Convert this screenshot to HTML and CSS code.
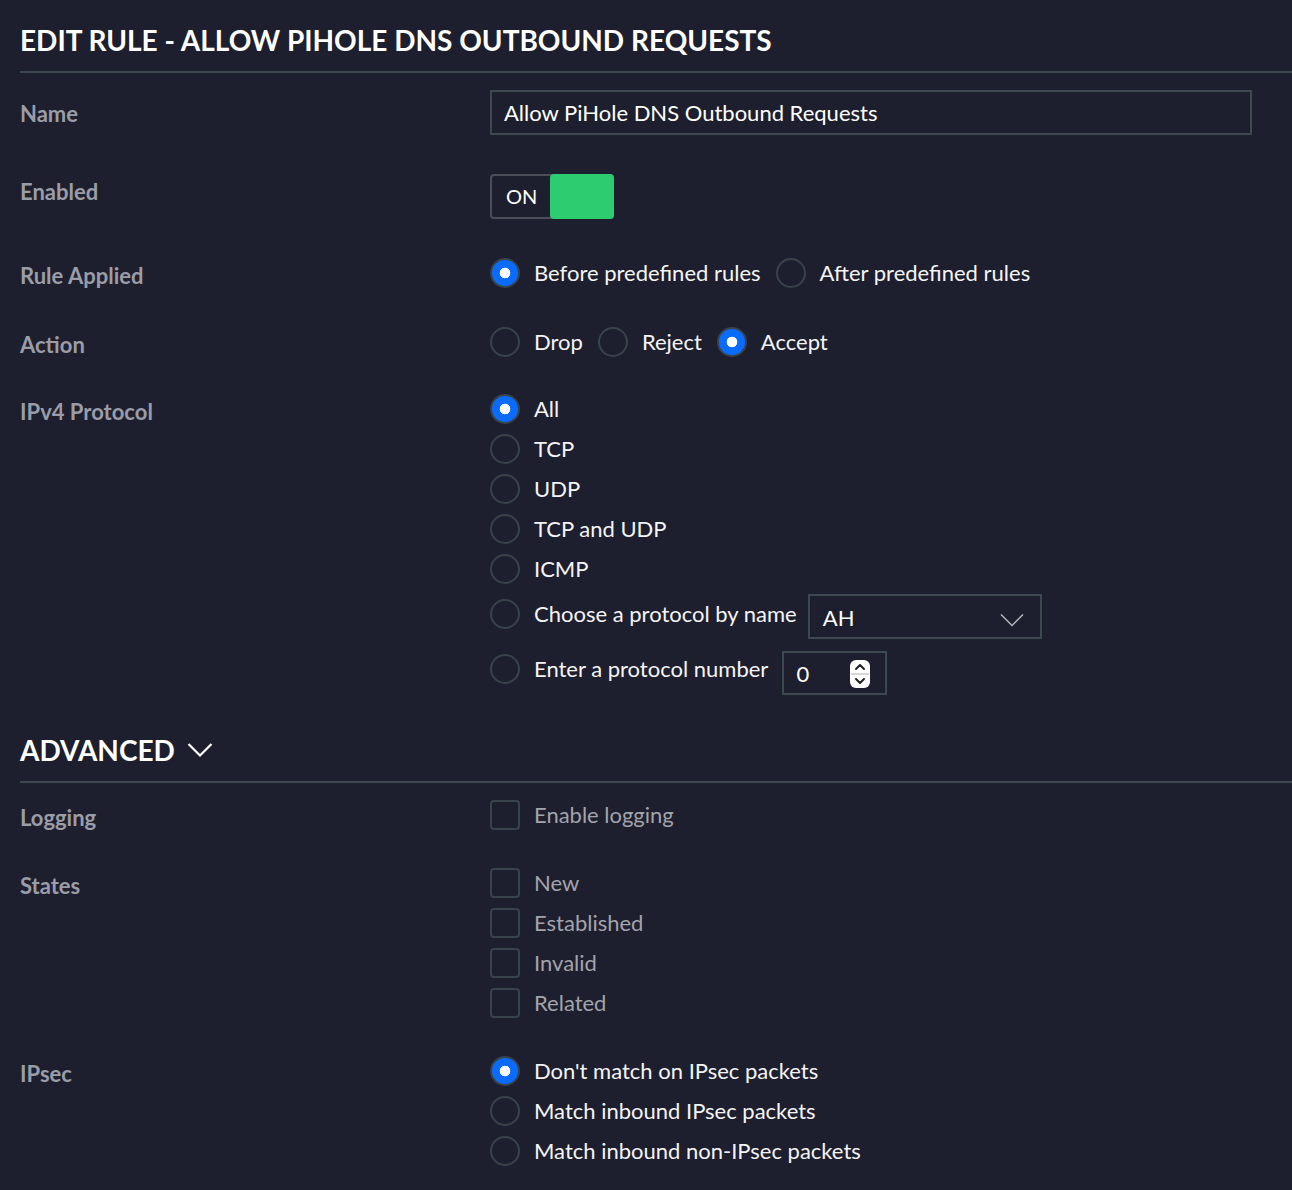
FILE: index.html
```html
<!DOCTYPE html>
<html lang="en">
<head>
    <meta charset="UTF-8">
    <meta name="viewport" content="width=device-width, initial-scale=1.0">
    <title>Edit Rule</title>
    <link rel="stylesheet" href="styles.css">
</head>

<body>
    <div class="page">
        <h1 class="section-title">Edit Rule - Allow PiHole DNS Outbound Requests</h1>

        <div class="form">
            <div class="row">
                <div class="label label-tall">Name</div>
                <input class="text-input" type="text" value="Allow PiHole DNS Outbound Requests">
            </div>

            <div class="row">
                <div class="label">Enabled</div>
                <div class="toggle">
                    <span class="toggle-text">ON</span>
                    <span class="toggle-knob"></span>
                </div>
            </div>

            <div class="row">
                <div class="label">Rule Applied</div>
                <div class="options-inline">
                    <label class="option"><input type="radio" name="applied" checked><span>Before predefined rules</span></label>
                    <label class="option"><input type="radio" name="applied"><span>After predefined rules</span></label>
                </div>
            </div>

            <div class="row">
                <div class="label">Action</div>
                <div class="options-inline">
                    <label class="option"><input type="radio" name="action"><span>Drop</span></label>
                    <label class="option"><input type="radio" name="action"><span>Reject</span></label>
                    <label class="option"><input type="radio" name="action" checked><span>Accept</span></label>
                </div>
            </div>

            <div class="row row-protocol">
                <div class="label">IPv4 Protocol</div>
                <div class="options">
                    <label class="option"><input type="radio" name="proto" checked><span>All</span></label>
                    <label class="option"><input type="radio" name="proto"><span>TCP</span></label>
                    <label class="option"><input type="radio" name="proto"><span>UDP</span></label>
                    <label class="option"><input type="radio" name="proto"><span>TCP and UDP</span></label>
                    <label class="option"><input type="radio" name="proto"><span>ICMP</span></label>
                    <label class="option option-field">
                        <input type="radio" name="proto"><span>Choose a protocol by name</span>
                        <div class="select">
                            <span>AH</span>
                            <svg width="24" height="14" viewBox="0 0 24 14"><path d="M1 1.5 L12 12.5 L23 1.5" fill="none" stroke="#b4b7bd" stroke-width="1.5"/></svg>
                        </div>
                    </label>
                    <label class="option option-field option-number">
                        <input type="radio" name="proto"><span>Enter a protocol number</span>
                        <div class="number">
                            <span>0</span>
                            <svg width="20" height="28" viewBox="0 0 20 28">
                                <rect x="0" y="0" width="20" height="28" rx="6" fill="#fff"/>
                                <line x1="1" y1="14" x2="19" y2="14" stroke="#c9c9cc" stroke-width="1.5"/>
                                <path d="M6 9 L10 5 L14 9" fill="none" stroke="#222" stroke-width="2" stroke-linecap="round" stroke-linejoin="round"/>
                                <path d="M6 19 L10 23 L14 19" fill="none" stroke="#222" stroke-width="2" stroke-linecap="round" stroke-linejoin="round"/>
                            </svg>
                        </div>
                    </label>
                </div>
            </div>
        </div>

        <h2 class="section-title advanced-title">
            Advanced
            <svg width="26" height="16" viewBox="0 0 26 16"><path d="M1.5 2 L13 13.5 L24.5 2" fill="none" stroke="#fff" stroke-width="2.2"/></svg>
        </h2>

        <div class="form form-advanced">
            <div class="row">
                <div class="label">Logging</div>
                <div class="options">
                    <label class="option option-muted"><input type="checkbox"><span>Enable logging</span></label>
                </div>
            </div>

            <div class="row">
                <div class="label">States</div>
                <div class="options">
                    <label class="option option-muted"><input type="checkbox"><span>New</span></label>
                    <label class="option option-muted"><input type="checkbox"><span>Established</span></label>
                    <label class="option option-muted"><input type="checkbox"><span>Invalid</span></label>
                    <label class="option option-muted"><input type="checkbox"><span>Related</span></label>
                </div>
            </div>

            <div class="row">
                <div class="label">IPsec</div>
                <div class="options">
                    <label class="option"><input type="radio" name="ipsec" checked><span>Don't match on IPsec packets</span></label>
                    <label class="option"><input type="radio" name="ipsec"><span>Match inbound IPsec packets</span></label>
                    <label class="option"><input type="radio" name="ipsec"><span>Match inbound non-IPsec packets</span></label>
                </div>
            </div>
        </div>
    </div>
</body>

</html>
```

FILE: styles.css
```css
body {
    margin: 0;
    background-color: #1e1f2e;
    font-family: Lato, "Open Sans", sans-serif;
    color: #f4f4f5;
}

.page {
    padding-left: 20px;
    padding-bottom: 40px;
}

.section-title {
    margin: 0;
    padding: 22px 0 13px;
    font-size: 28px;
    line-height: 36px;
    font-weight: 700;
    color: #fff;
    text-transform: uppercase;
    border-bottom: 2px solid #3d484f;
}

.advanced-title {
    margin-top: 37px;
    padding-top: 0;
    display: flex;
    align-items: center;
    gap: 12px;
}

.form {
    padding: 17px 40px 0 0;
    display: flex;
    flex-direction: column;
    gap: 39px;
}

.form-advanced {
    gap: 38px;
}

.row {
    display: grid;
    grid-template-columns: 470px 1fr;
    align-items: start;
}

.row-protocol {
    margin-top: -2px;
}

.label {
    font-size: 22px;
    line-height: 24px;
    font-weight: 700;
    color: #9a9da7;
    padding-top: 6px;
}

.label-tall {
    padding-top: 12px;
}

/* text field */
.text-input {
    box-sizing: border-box;
    width: 100%;
    height: 45px;
    padding: 0 12px;
    border: 2px solid #3d484f;
    background: transparent;
    color: #fff;
    font-family: inherit;
    font-size: 22px;
    outline: none;
}

/* on/off switch */
.toggle {
    box-sizing: border-box;
    display: flex;
    width: 124px;
    height: 45px;
    border: 2px solid #4a4e57;
    border-radius: 4px;
}

.toggle-text {
    width: 44px;
    padding-left: 14px;
    font-size: 20px;
    line-height: 41px;
    color: #fff;
}

.toggle-knob {
    flex: 1;
    margin: -2px -2px -2px 0;
    background-color: #2ecc71;
    border-radius: 4px;
}

/* radio + checkbox lists */
.options {
    display: flex;
    flex-direction: column;
    gap: 10px;
}

.options-inline {
    display: flex;
    align-items: center;
    gap: 15px;
}

.option {
    display: flex;
    align-items: center;
    gap: 14px;
    font-size: 22px;
    line-height: 30px;
    color: #f4f4f5;
}

.option-muted {
    color: #a2a4ab;
}

input[type="radio"],
input[type="checkbox"] {
    appearance: none;
    -webkit-appearance: none;
    box-sizing: border-box;
    flex: none;
    width: 30px;
    height: 30px;
    margin: 0;
    border: 2px solid #38434a;
    background: transparent;
}

input[type="radio"] {
    border-radius: 50%;
}

input[type="radio"]:checked {
    background: radial-gradient(circle, #fff 0 5px, #0a6cff 5.6px);
}

input[type="checkbox"] {
    border-radius: 4px;
}

/* rows with a field after the label text */
.option-field {
    align-items: flex-start;
    line-height: 40px;
}

.option-field input[type="radio"] {
    margin-top: 5px;
}

.option-number {
    margin-top: 2px;
    line-height: 36px;
}

.option-number input[type="radio"] {
    margin-top: 3px;
}

/* protocol select */
.select {
    box-sizing: border-box;
    display: flex;
    align-items: center;
    justify-content: space-between;
    width: 234px;
    height: 45px;
    margin-left: -3px;
    padding: 2px 16px 0 13px;
    border: 2px solid #3d484f;
    color: #fff;
}

.select svg {
    margin-top: 4px;
}

.number {
    box-sizing: border-box;
    display: flex;
    align-items: center;
    justify-content: space-between;
    width: 105px;
    height: 44px;
    padding: 2px 15px 0 12px;
    border: 2px solid #3d484f;
    color: #fff;
}
```
